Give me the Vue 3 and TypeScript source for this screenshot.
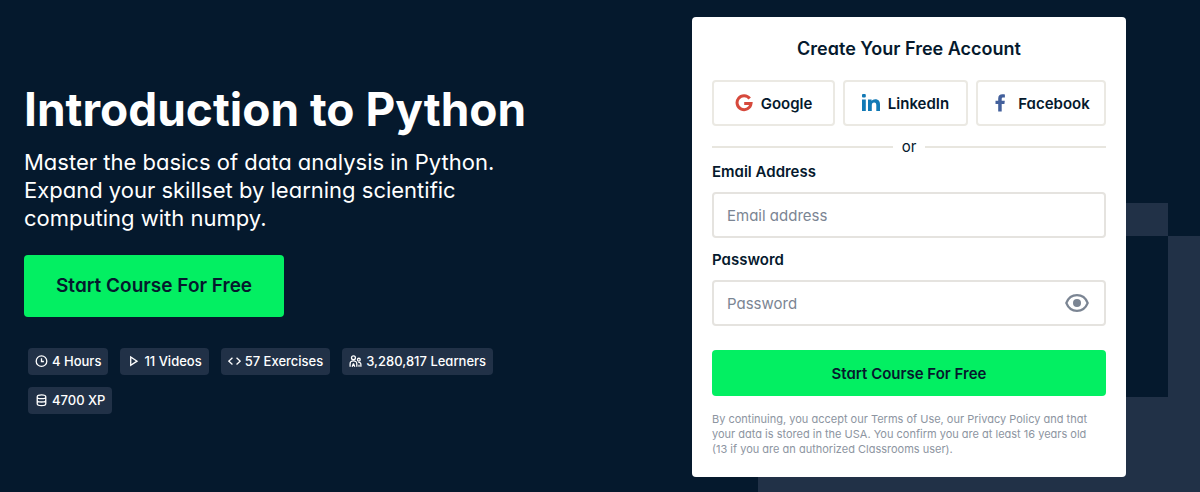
<script setup lang="ts">
import { ref } from 'vue'

interface Stat {
  icon: 'clock' | 'play' | 'code' | 'people' | 'coins'
  label: string
}

const stats: Stat[] = [
  { icon: 'clock', label: '4 Hours' },
  { icon: 'play', label: '11 Videos' },
  { icon: 'code', label: '57 Exercises' },
  { icon: 'people', label: '3,280,817 Learners' },
  { icon: 'coins', label: '4700 XP' },
]

const email = ref('')
const password = ref('')
const showPassword = ref(false)
</script>

<template>
  <main class="hero">
    <section class="intro">
      <h1>Introduction to Python</h1>
      <p class="lead">Master the basics of data analysis in Python. Expand your skillset by learning scientific computing with numpy.</p>
      <button type="button" class="cta">Start Course For Free</button>
      <ul class="stats">
        <li v-for="stat in stats" :key="stat.label" class="stat">
          <svg class="stat-icon" viewBox="0 0 14 14" aria-hidden="true">
            <template v-if="stat.icon === 'clock'">
              <circle cx="7" cy="6.600" r="5.700" />
              <path d="M7 3.400V7H9.600" />
            </template>
            <path v-else-if="stat.icon === 'play'" d="M4 2.200V11L10.800 6.600Z" />
            <path v-else-if="stat.icon === 'code'" d="M4.800 3L1 6.600L4.800 10.200M9.200 3L13 6.600L9.200 10.200" />
            <template v-else-if="stat.icon === 'people'">
              <circle cx="4.800" cy="3" r="2.100" />
              <path d="M1.200 12.600V9.600C1.200 7.800 2.600 6.400 4.800 6.400S8.400 7.800 8.400 9.600V12.600M4.800 9.200L3.400 12.600M4.800 9.200L6.200 12.600" />
              <circle cx="10.600" cy="5" r="1.500" />
              <path d="M10 8C11.800 7.700 12.800 8.800 12.800 10.200V12.600M10.800 12.600V10.600" />
            </template>
            <path v-else d="M2.400 3C2.400 1.600 4 1 7 1S11.600 1.600 11.600 3V10.600C11.600 12 10 12.600 7 12.600S2.400 12 2.400 10.600ZM2.400 3.400C2.400 4.600 4 5 7 5S11.600 4.600 11.600 3.400M2.400 6.600C2.400 8 4 8.600 7 8.600S11.600 8 11.600 6.600" />
          </svg>
          <span>{{ stat.label }}</span>
        </li>
      </ul>
    </section>

    <form class="card" @submit.prevent>
      <h2>Create Your Free Account</h2>
      <div class="socials">
        <button type="button" class="social">
          <svg class="social-icon" viewBox="0 0 18 18" aria-hidden="true">
            <path fill="none" stroke="#d6493c" stroke-width="3" d="M14.700 4.500A7 7 0 1 0 16 9.600H9.200" />
          </svg>
          <span>Google</span>
        </button>
        <button type="button" class="social">
          <svg class="social-icon" viewBox="0 0 18 18" aria-hidden="true">
            <g fill="#1279b5">
              <rect x="0" y="5.500" width="3.800" height="11.500" />
              <rect x="0" y="0" width="3.800" height="3.600" rx="1" />
              <path d="M6 5.500H9.600V7C10.300 5.900 11.600 5.200 13.200 5.200C16.600 5.200 18 7.300 18 10.500V17H14.300V11.200C14.300 9.500 13.800 8.400 12.200 8.400C10.400 8.400 9.800 9.500 9.800 11.200V17H6Z" />
            </g>
          </svg>
          <span>LinkedIn</span>
        </button>
        <button type="button" class="social">
          <svg class="social-icon" viewBox="0 0 18 18" aria-hidden="true">
            <path fill="#43609c" d="M6.200 17.500V10H3.500V6.700H6.200V4.500C6.200 1.700 7.900.3 10.400.3C11.600.3 12.500.4 12.900.5V3.500H11.300C9.900 3.500 9.700 4.100 9.700 5V6.700H12.800L12.400 10H9.700V17.500Z" />
          </svg>
          <span>Facebook</span>
        </button>
      </div>
      <div class="divider"><span>or</span></div>
      <label for="email">Email Address</label>
      <div class="field">
        <input id="email" v-model="email" type="email" placeholder="Email address">
      </div>
      <label for="password">Password</label>
      <div class="field">
        <input id="password" v-model="password" :type="showPassword ? 'text' : 'password'" placeholder="Password">
        <button type="button" class="reveal" aria-label="Show password" @click="showPassword = !showPassword">
          <svg viewBox="0 0 24 20" aria-hidden="true">
            <path fill="none" stroke="#7b8593" stroke-width="2.200" stroke-linejoin="round" d="M1.300 10C3.200 5.200 7.100 2.200 12 2.200S20.800 5.200 22.700 10C20.800 14.800 16.900 17.800 12 17.800S3.200 14.800 1.300 10Z" />
            <circle cx="12" cy="10" r="4" fill="#7b8593" />
          </svg>
        </button>
      </div>
      <button type="submit" class="submit">Start Course For Free</button>
      <p class="terms">By continuing, you accept our Terms of Use, our Privacy Policy and that your data is stored in the USA. You confirm you are at least 16 years old (13 if you are an authorized Classrooms user).</p>
    </form>
  </main>
</template>

<style>
body {
  margin: 0;
  background: #05192d;
}
</style>

<style scoped>
* {
  box-sizing: border-box;
}

.hero {
  display: flex;
  align-items: center;
  justify-content: space-between;
  gap: 40px;
  min-height: 100vh;
  padding: 16px 74px 14px 24px;
  color: #fff;
  font-family: Inter, "Liberation Sans", sans-serif;
  font-feature-settings: "cv11";
  background-color: #05192d;
  background-image:
    linear-gradient(#213147, #213147),
    linear-gradient(#213147, #213147),
    linear-gradient(#213147, #213147);
  background-repeat: no-repeat;
  background-position: right 32px bottom 256px, right bottom, right bottom;
  background-size: 80px 33px, 32px 256px, 442px 95px;
}

.intro {
  flex: 0 1 504px;
  min-width: 0;
}

h1 {
  margin: 0;
  font-size: 46px;
  line-height: 56px;
  font-weight: 700;
}

.lead {
  max-width: 480px;
  margin: 11px 0 0;
  font-size: 22px;
  line-height: 28px;
}

button,
input {
  font-family: inherit;
  font-feature-settings: inherit;
}

button {
  cursor: pointer;
}

.cta {
  display: block;
  height: 62px;
  margin-top: 23px;
  padding: 0 32px;
  border: 0;
  border-radius: 4px;
  background: #03ef62;
  color: #05192d;
  font-size: 19px;
  font-weight: 600;
}

.stats {
  display: flex;
  flex-wrap: wrap;
  gap: 12px;
  margin: 31px 0 0;
  padding: 0 4px;
  list-style: none;
}

.stat {
  display: flex;
  align-items: center;
  gap: 4px;
  height: 27px;
  padding: 0 7px;
  border-radius: 4px;
  background: #213147;
  font-size: 13px;
  font-weight: 500;
}

.stat-icon {
  width: 13px;
  height: 13px;
  fill: none;
  stroke: #fff;
  stroke-width: 1.4;
}

.card {
  flex: 0 1 434px;
  padding: 20px;
  border-radius: 4px;
  background: #fff;
  color: #05192d;
}

h2 {
  margin: 0;
  font-size: 18px;
  line-height: 24px;
  font-weight: 600;
  text-align: center;
}

.socials {
  display: grid;
  grid-template-columns: 123fr 125fr 130fr;
  gap: 8px;
  margin-top: 19px;
}

.social {
  display: flex;
  align-items: center;
  justify-content: center;
  gap: 8px;
  height: 46px;
  padding: 0 8px;
  border: 2px solid #ebe9e3;
  border-radius: 4px;
  background: #fff;
  color: #05192d;
  font-size: 15px;
  font-weight: 600;
}

.social-icon {
  width: 18px;
  height: 18px;
}

.divider {
  display: flex;
  align-items: center;
  gap: 9px;
  margin-top: 11px;
  font-size: 15px;
  line-height: 20px;
}

.divider::before,
.divider::after {
  content: "";
  flex: 1;
  height: 2px;
  background: #e8e6df;
}

label {
  display: block;
  margin-top: 5px;
  font-size: 15px;
  line-height: 20px;
  font-weight: 600;
}

.field {
  display: flex;
  align-items: center;
  height: 46px;
  margin: 10px 0 12px;
  border: 2px solid #e5e3df;
  border-radius: 4px;
}

.field input {
  flex: 1;
  min-width: 0;
  height: 100%;
  padding: 0 13px;
  border: 0;
  outline: 0;
  background: none;
  color: #05192d;
  font-size: 15px;
}

.field input::placeholder {
  color: #7b8593;
  opacity: 1;
}

.reveal {
  display: flex;
  margin-right: 15px;
  padding: 0;
  border: 0;
  background: none;
}

.reveal svg {
  width: 24px;
  height: 20px;
}

.submit {
  display: block;
  width: 100%;
  height: 46px;
  margin-top: 24px;
  border: 0;
  border-radius: 4px;
  background: #03ef62;
  color: #05192d;
  font-size: 15px;
  font-weight: 600;
}

.terms {
  margin: 16px 0 0;
  padding-right: 6px;
  color: #8d95a1;
  font-size: 11px;
  line-height: 15px;
}
</style>
